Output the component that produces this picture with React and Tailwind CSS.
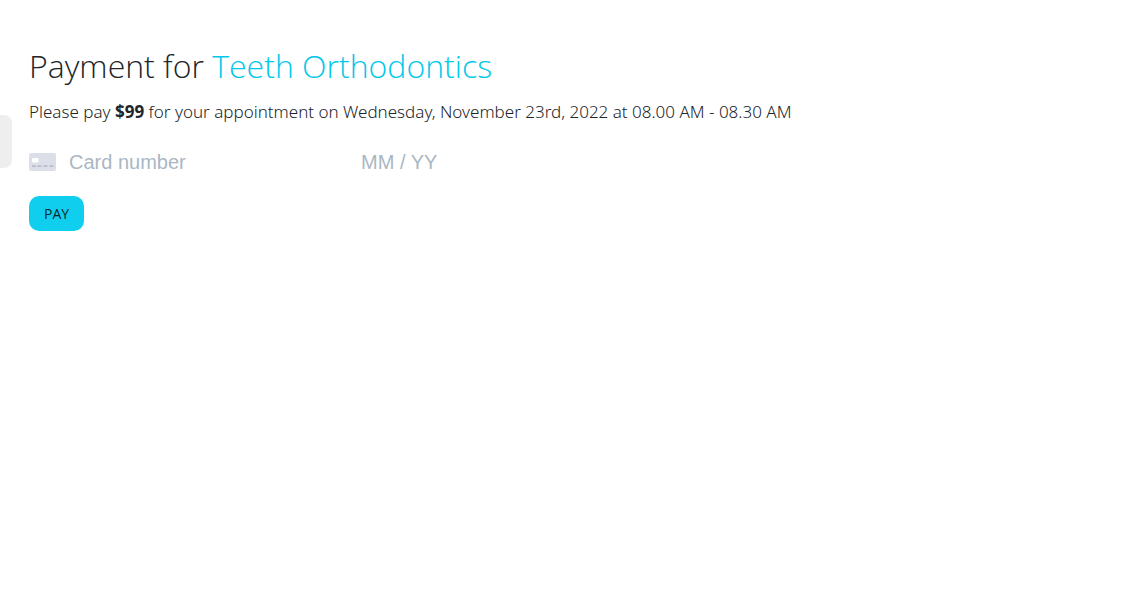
function CardIcon() {
  return (
    <svg aria-hidden="true" viewBox="0 0 27 18" className="h-[18px] w-[27px] shrink-0">
      <rect width="27" height="18" rx="2" fill="#dcdfe8" />
      <rect x="3" y="5" width="6.5" height="4.5" rx="1" fill="#fff" />
      <path d="M3 13.2h4M8.5 13.2h4M14.5 13.2h4M20.5 13.2h4" stroke="#b9bccd" strokeWidth="1.8" />
    </svg>
  );
}

const inputStyle =
  "h-6 min-w-0 bg-transparent font-['Liberation_Sans',Arial,sans-serif] text-xl leading-6 text-[#32325d] outline-none placeholder:text-[#aab7c4]";

export default function App() {
  return (
    <div className="flex min-h-screen items-start bg-white font-['Open_Sans','Noto_Sans',sans-serif] text-[#212529]">
      <aside className="w-3 shrink-0 pt-[115px]">
        <div className="h-[53px] rounded-r-lg bg-[#eeeeee]" />
      </aside>
      <main className="min-w-0 flex-1 pt-[46px] pr-4 pl-[17px]">
        <h1 className="text-[32px] leading-10 font-light">
          Payment for <span className="text-[#00c8ea]">Teeth Orthodontics</span>
        </h1>
        <p className="mt-3 font-['Noto_Sans','Open_Sans',sans-serif] text-[17px] leading-7 font-light">
          Please pay <strong className="font-bold">$99</strong> for your appointment on Wednesday,
          November 23rd, 2022 at 08.00 AM - 08.30 AM
        </p>
        <form className="mt-6" onSubmit={(e) => e.preventDefault()}>
          <div className="flex max-w-[500px] items-center">
            <CardIcon />
            <input
              className={`${inputStyle} ml-[13px] w-[292px]`}
              aria-label="Card number"
              placeholder="Card number"
              inputMode="numeric"
            />
            <input
              className={`${inputStyle} flex-1`}
              aria-label="Expiry date"
              placeholder="MM / YY"
              inputMode="numeric"
            />
          </div>
          <button
            type="submit"
            className="mt-[22px] h-[35px] rounded-[10px] bg-[#10cfee] px-[15px] text-sm leading-5 font-normal text-[#0b2730]"
          >
            PAY
          </button>
        </form>
      </main>
    </div>
  );
}
